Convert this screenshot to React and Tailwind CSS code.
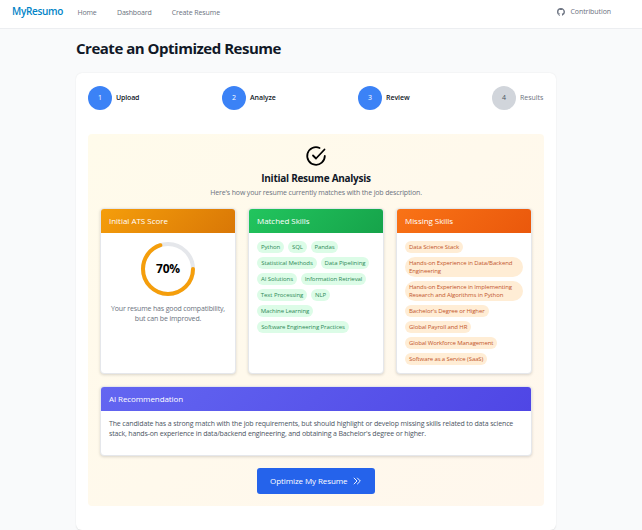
import { VscGithubInverted } from 'react-icons/vsc';

const steps = [
  { n: 1, label: 'Upload', done: true, width: 'w-[23px]', track: 'tracking-[-0.150px]' },
  { n: 2, label: 'Analyze', done: true, width: 'w-[25px]', track: 'tracking-[-0.080px]' },
  { n: 3, label: 'Review', done: true, width: 'w-[23px]', track: 'tracking-[-0.060px]' },
  { n: 4, label: 'Results', done: false, width: 'w-[24px]', track: 'tracking-[-0.025px]' },
];

const matched = [
  ['Python', 'w-[27px]'],
  ['SQL', 'w-[19px]'],
  ['Pandas', 'w-[27px]'],
  ['Statistical Methods', 'w-[60px]'],
  ['Data Pipelining', 'w-[48px]'],
  ['AI Solutions', 'w-[40px]'],
  ['Information Retrieval', 'w-[65px]'],
  ['Text Processing', 'w-[50px]'],
  ['NLP', 'w-[19px]'],
  ['Machine Learning', 'w-[56px]'],
  ['Software Engineering Practices', 'w-[92px]'],
];

const missing = [
  [['Data Science Stack'], 'w-[58px]'],
  [['Hands-on Experience in Data/Backend', 'Engineering'], 'w-[118px]'],
  [['Hands-on Experience in Implementing', 'Research and Algorithms in Python'], 'w-[118px]'],
  [["Bachelor's Degree or Higher"], 'w-[84px]'],
  [['Global Payroll and HR'], 'w-[66px]'],
  [['Global Workforce Management'], 'w-[92px]'],
  [['Software as a Service (SaaS)'], 'w-[82px]'],
];

function Card({ title, header, track, className = '', children }) {
  return (
    <section className={`flex flex-col overflow-hidden rounded border border-[#e5e7eb] bg-white shadow-[0_1px_3px_rgba(0,0,0,0.15)] ${className}`}>
      <h3 className={`flex h-6 shrink-0 items-center px-2 text-[8px] font-medium text-white ${header} ${track}`}>{title}</h3>
      {children}
    </section>
  );
}

export default function App() {
  return (
    <div className="h-[530px] w-full overflow-hidden whitespace-nowrap bg-[#f9fafb] font-['Open_Sans',sans-serif] text-[#111827]">
      <nav className="flex h-[29px] items-start border-b border-[#eceef1] bg-white pl-3 pr-[31px] text-[7px] font-medium text-[#6b7280]">
        <div className="w-[65.5px] pt-1 text-[10px] font-semibold leading-[14px] tracking-[-0.322px] text-[#0284c7]">MyResumo</div>
        <div className="w-[39.5px] pt-2 leading-[10px] tracking-[-0.196px]">Home</div>
        <div className="w-[54.7px] pt-2 leading-[10px] tracking-[-0.181px]">Dashboard</div>
        <div className="flex-1 pt-2 leading-[10px] tracking-[-0.102px]">Create Resume</div>
        <div className="flex items-center gap-[5px] pt-[7px] leading-[10px] tracking-[-0.073px]">
          <VscGithubInverted className="size-2" />
          <span>Contribution</span>
        </div>
      </nav>

      <main className="ml-[76px] w-[480px] pt-[9px]">
        <h1 className="h-[35px] text-[15px] font-bold leading-[21px] tracking-[-0.480px]">Create an Optimized Resume</h1>

        <div className="h-[457px] rounded-md bg-white p-3 shadow-[0_0.5px_1.5px_rgba(0,0,0,0.1)]">
          <ol className="mt-px flex h-6 justify-between">
            {steps.map((s) => (
              <li key={s.n} className="flex items-center gap-1">
                <span className={`flex size-6 items-center justify-center rounded-full text-[7px] ${s.done ? 'bg-[#3b82f6] text-white' : 'bg-[#d1d5db] text-[#4b5563]'}`}>{s.n}</span>
                <span className={`text-[7px] ${s.width} ${s.track} ${s.done ? 'font-semibold text-[#111827]' : 'font-medium text-[#6b7280]'}`}>{s.label}</span>
              </li>
            ))}
          </ol>

          <div className="mt-6 h-[372px] rounded bg-[linear-gradient(135deg,#fffbeb,#fff7ed)] p-3">
            <header className="flex h-[62px] flex-col items-center">
              <svg className="-mt-0.5 size-6 shrink-0" viewBox="0 0 24 24" fill="none" stroke="#000" strokeWidth="1.800" strokeLinecap="round" strokeLinejoin="round">
                <path d="M9 11.500l3 3L20.500 5.500" />
                <path d="M20.800 12a8.800 8.800 0 1 1-5.200-8.050" />
              </svg>
              <h2 className="mt-[3px] text-[10px] font-bold leading-[14px] tracking-[-0.270px]">Initial Resume Analysis</h2>
              <p className="text-[7px] leading-4 tracking-[-0.145px] text-[#6b7280]">Here's how your resume currently matches with the job description.</p>
            </header>

            <div className="grid h-[166px] grid-cols-3 gap-3">
              <Card title="Initial ATS Score" header="bg-[linear-gradient(135deg,#f59e0b,#d97706)]" track="tracking-[-0.017px]">
                <div className="flex flex-col items-center pt-2">
                  <div className="grid size-14 place-items-center">
                    <svg className="col-start-1 row-start-1 size-14" viewBox="0 0 56 56" fill="none" strokeWidth="4">
                      <circle cx="28" cy="28" r="25" stroke="#e5e7eb" />
                      <circle cx="28" cy="28" r="25" stroke="#f59e0b" strokeLinecap="round" pathLength="100" strokeDasharray="70 100" />
                    </svg>
                    <span className="col-start-1 row-start-1 text-[12px] font-bold leading-4 tracking-[-0.178px] text-black">70%</span>
                  </div>
                  <p className="mt-[7px] text-center text-[7px] leading-[10px] tracking-[-0.151px] text-[#6b7280]">
                    Your resume has good compatibility,
                    <br />
                    but can be improved.
                  </p>
                </div>
              </Card>

              <Card title="Matched Skills" header="bg-[linear-gradient(135deg,#22c55e,#16a34a)]" track="tracking-[-0.047px]">
                <ul className="flex flex-wrap gap-1 p-2">
                  {matched.map(([text, width]) => (
                    <li key={text} className={`flex h-3 items-center justify-center rounded-full bg-[#dcfce7] text-[6px] font-medium leading-[8px] tracking-[-0.080px] text-[#2f8a58] ${width}`}>{text}</li>
                  ))}
                </ul>
              </Card>

              <Card title="Missing Skills" header="bg-[linear-gradient(135deg,#f97316,#ea580c)]" track="tracking-[-0.046px]">
                <ul className="flex flex-col gap-1 p-2">
                  {missing.map(([lines, width]) => (
                    <li key={lines[0]} className={`rounded-[10px] bg-[#ffedd5] px-1 py-0.5 text-[6px] font-medium leading-[8px] tracking-[-0.110px] text-[#c2562c] ${width}`}>
                      {lines.map((l) => (
                        <div key={l}>{l}</div>
                      ))}
                    </li>
                  ))}
                </ul>
              </Card>
            </div>

            <Card title="AI Recommendation" header="bg-[linear-gradient(135deg,#6366f1,#4f46e5)]" track="tracking-[-0.093px]" className="mt-3 h-[70px]">
              <p className="px-2 pt-2 text-[7px] leading-[10px] tracking-[-0.138px] text-[#4b5563]">
                The candidate has a strong match with the job requirements, but should highlight or develop missing skills related to data science
                <br />
                <span className="tracking-[-0.150px]">stack, hands-on experience in data/backend engineering, and obtaining a Bachelor's degree or higher.</span>
              </p>
            </Card>

            <button className="mx-auto mt-3 flex h-[26px] w-[118px] items-center rounded-[3px] bg-[#2563eb] pl-[13px] text-[8px] font-medium tracking-[-0.087px] text-white">
              Optimize My Resume
              <svg className="ml-1 size-2.5" viewBox="0 0 24 24" fill="none" stroke="currentColor" strokeWidth="2.200" strokeLinecap="round" strokeLinejoin="round">
                <path d="M13 5l7 7-7 7M5 5l7 7-7 7" />
              </svg>
            </button>
          </div>
        </div>
      </main>
    </div>
  );
}
